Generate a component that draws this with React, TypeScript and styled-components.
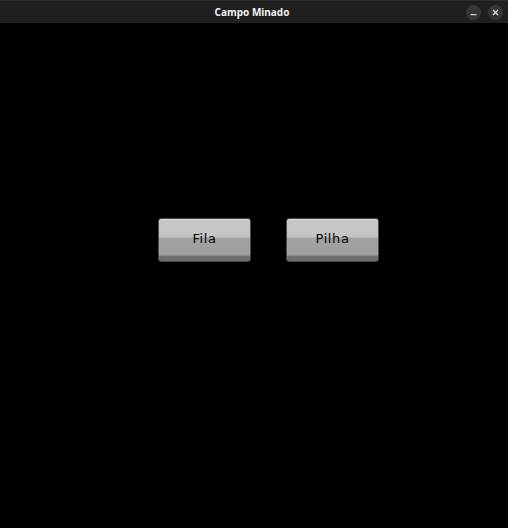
import styled, { createGlobalStyle } from 'styled-components';

const GlobalStyle = createGlobalStyle`
  html, body {
    margin: 0;
    padding: 0;
    background: #000;
  }
  body {
    font-family: "DejaVu Sans", sans-serif;
  }
`;

const Window = styled.div`
  width: 508px;
  height: 528px;
  display: flex;
  flex-direction: column;
  background: #000;
`;

const TitleBar = styled.div`
  height: 23px;
  flex: none;
  display: grid;
  grid-template-columns: 1fr auto 1fr;
  align-items: center;
  background: #1f1f1f;
  border-top: 1px solid #2c2c2c;
  box-sizing: border-box;
`;

const Title = styled.span`
  grid-column: 2;
  color: #f2f2f2;
  font-family: "Noto Sans", "DejaVu Sans", sans-serif;
  font-size: 10px;
  font-weight: bold;
  padding-right: 4px;
`;

const Controls = styled.div`
  grid-column: 3;
  justify-self: end;
  display: flex;
  gap: 7px;
  padding-right: 5px;
`;

const RoundButton = styled.div`
  width: 15px;
  height: 15px;
  border-radius: 50%;
  background: #363636;
  display: flex;
  align-items: center;
  justify-content: center;
`;

const Content = styled.div`
  flex: 1;
  display: flex;
  gap: 35px;
  padding: 195px 0 0 158px;
`;

const GameButton = styled.button`
  width: 93px;
  height: 44px;
  box-sizing: border-box;
  padding: 0 0 3px 0;
  border: 1px solid #4a4a4a;
  border-radius: 3px;
  background: linear-gradient(
    to bottom,
    #d8d8d8 0px,
    #c8c8c8 2px,
    #c4c4c4 18px,
    #a2a29e 19px,
    #a0a09c 36px,
    #70706e 37px,
    #6c6c6a 100%
  );
  color: #0c0c0c;
  font-family: "DejaVu Sans", sans-serif;
  font-size: 13px;
  letter-spacing: 0.6px;
  line-height: 1;
  -webkit-text-stroke: 0.12px #0c0c0c;
`;

export default function App() {
  return (
    <>
      <GlobalStyle />
      <Window>
        <TitleBar>
          <Title>Campo Minado</Title>
          <Controls>
            <RoundButton>
              <svg width="7" height="7" viewBox="0 0 7 7">
                <rect x="0.5" y="5" width="6" height="1.2" fill="#cfcfcf" />
              </svg>
            </RoundButton>
            <RoundButton>
              <svg width="7" height="7" viewBox="0 0 7 7">
                <path d="M1 1 L6 6 M6 1 L1 6" stroke="#e0e0e0" strokeWidth="1.3" />
              </svg>
            </RoundButton>
          </Controls>
        </TitleBar>
        <Content>
          <GameButton type="button">Fila</GameButton>
          <GameButton type="button">Pilha</GameButton>
        </Content>
      </Window>
    </>
  );
}
